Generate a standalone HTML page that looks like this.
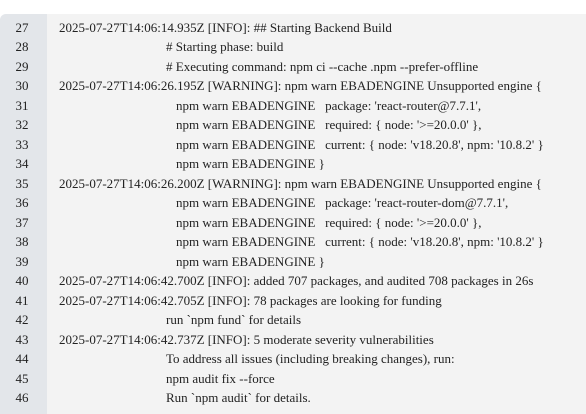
<!DOCTYPE html>
<html><head><style>
html,body{margin:0;padding:0;width:586px;height:405px;overflow:hidden;background:#fff;}
#p{position:absolute;left:0;top:14px;width:586px;height:400px;background:#f3f3f3;border-top-left-radius:6px;overflow:hidden;}
#g{position:absolute;left:0;top:0;width:47px;height:400px;background:#e3e6ea;}
.r{position:absolute;left:0;height:19.5px;line-height:19.5px;font-family:"Liberation Serif",serif;font-size:13px;color:#222;white-space:pre;}
.n{position:absolute;left:0;width:44px;text-align:center;}
.t{position:absolute;}
</style></head><body>
<div id="p"><div id="g"></div>
<div class="r" style="top:3.5px"><span class="n">27</span><span class="t" style="left:59px">2025-07-27T14:06:14.935Z [INFO]: ## Starting Backend Build</span></div>
<div class="r" style="top:23px"><span class="n">28</span><span class="t" style="left:166px"># Starting phase: build</span></div>
<div class="r" style="top:42.5px"><span class="n">29</span><span class="t" style="left:166px"># Executing command: npm ci --cache .npm --prefer-offline</span></div>
<div class="r" style="top:62px"><span class="n">30</span><span class="t" style="left:59px">2025-07-27T14:06:26.195Z [WARNING]: npm warn EBADENGINE Unsupported engine {</span></div>
<div class="r" style="top:81.5px"><span class="n">31</span><span class="t" style="left:176px">npm warn EBADENGINE   package: 'react-router@7.7.1',</span></div>
<div class="r" style="top:101px"><span class="n">32</span><span class="t" style="left:176px">npm warn EBADENGINE   required: { node: '&gt;=20.0.0' },</span></div>
<div class="r" style="top:120.5px"><span class="n">33</span><span class="t" style="left:176px">npm warn EBADENGINE   current: { node: 'v18.20.8', npm: '10.8.2' }</span></div>
<div class="r" style="top:140px"><span class="n">34</span><span class="t" style="left:176px">npm warn EBADENGINE }</span></div>
<div class="r" style="top:159.5px"><span class="n">35</span><span class="t" style="left:59px">2025-07-27T14:06:26.200Z [WARNING]: npm warn EBADENGINE Unsupported engine {</span></div>
<div class="r" style="top:179px"><span class="n">36</span><span class="t" style="left:176px">npm warn EBADENGINE   package: 'react-router-dom@7.7.1',</span></div>
<div class="r" style="top:198.5px"><span class="n">37</span><span class="t" style="left:176px">npm warn EBADENGINE   required: { node: '&gt;=20.0.0' },</span></div>
<div class="r" style="top:218px"><span class="n">38</span><span class="t" style="left:176px">npm warn EBADENGINE   current: { node: 'v18.20.8', npm: '10.8.2' }</span></div>
<div class="r" style="top:237.5px"><span class="n">39</span><span class="t" style="left:176px">npm warn EBADENGINE }</span></div>
<div class="r" style="top:257px"><span class="n">40</span><span class="t" style="left:59px">2025-07-27T14:06:42.700Z [INFO]: added 707 packages, and audited 708 packages in 26s</span></div>
<div class="r" style="top:276.5px"><span class="n">41</span><span class="t" style="left:59px">2025-07-27T14:06:42.705Z [INFO]: 78 packages are looking for funding</span></div>
<div class="r" style="top:296px"><span class="n">42</span><span class="t" style="left:166px">run `npm fund` for details</span></div>
<div class="r" style="top:315.5px"><span class="n">43</span><span class="t" style="left:59px">2025-07-27T14:06:42.737Z [INFO]: 5 moderate severity vulnerabilities</span></div>
<div class="r" style="top:335px"><span class="n">44</span><span class="t" style="left:166px">To address all issues (including breaking changes), run:</span></div>
<div class="r" style="top:354.5px"><span class="n">45</span><span class="t" style="left:166px">npm audit fix --force</span></div>
<div class="r" style="top:374px"><span class="n">46</span><span class="t" style="left:166px">Run `npm audit` for details.</span></div>
</div>
</body></html>
